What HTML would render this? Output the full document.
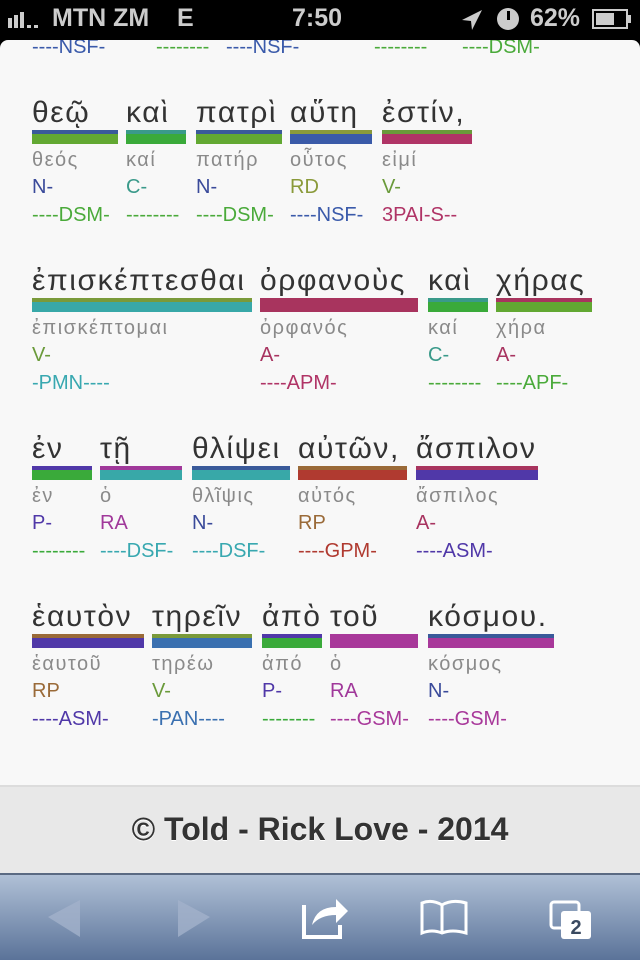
<!DOCTYPE html>
<html><head><meta charset="utf-8"><style>
*{margin:0;padding:0;box-sizing:border-box}
body{width:640px;height:960px;overflow:hidden;background:#000;font-family:"Liberation Sans","DejaVu Sans",sans-serif;position:relative}
.sb{position:absolute;left:0;top:0;width:640px;height:40px;background:#000;color:#ccc;font-weight:bold;font-size:25px}
.page{position:absolute;left:0;top:40px;width:640px;height:833px;background:#f8f8f8;border-radius:8px 8px 0 0;overflow:hidden}
.c{position:absolute}
.w{position:absolute;left:0;white-space:nowrap;font-size:30px;line-height:30px;color:#333;font-family:"Liberation Sans","DejaVu Sans",sans-serif;letter-spacing:1.6px}
.t{position:absolute;left:0;right:0;height:4px}
.b{position:absolute;left:0;right:0;height:10px}
.l{position:absolute;left:0;white-space:nowrap;font-size:20px;line-height:24px;color:#8a8a8a;font-family:"Liberation Sans","DejaVu Sans",sans-serif;letter-spacing:1.5px}
.p,.q{position:absolute;left:0;white-space:nowrap;font-size:20px;line-height:24px}
.foot{position:absolute;left:0;top:745px;width:640px;height:88px;background:#e8e8e8;border-top:2px solid #dcdcdc;text-align:center;font-weight:bold;font-size:32px;color:#333;line-height:84px;text-shadow:0 1px 0 #fff}
.tb{position:absolute;left:0;top:873px;width:640px;height:87px;background:linear-gradient(#b0c0d6,#5b7399);border-top:2px solid #5a6a82}
</style></head><body>
<div class="sb">
<div style="position:absolute;left:8px;top:18px;width:4px;height:10px;background:#ccc"></div>
<div style="position:absolute;left:14px;top:15px;width:4px;height:13px;background:#ccc"></div>
<div style="position:absolute;left:20px;top:12px;width:4px;height:16px;background:#ccc"></div>
<div style="position:absolute;left:27px;top:25px;width:4px;height:3px;background:#ccc"></div>
<div style="position:absolute;left:34px;top:25px;width:4px;height:3px;background:#ccc"></div>
<div style="position:absolute;left:52px;top:4px">MTN ZM</div>
<div style="position:absolute;left:177px;top:4px">E</div>
<div style="position:absolute;left:292px;top:4px">7:50</div>
<svg style="position:absolute;left:460px;top:8px" width="24" height="24"><path d="M22 2 L2 12 L11 13 L12 22 Z" fill="#ccc"/></svg>
<div style="position:absolute;left:497px;top:8px;width:22px;height:22px;border-radius:50%;background:#ccc"></div>
<div style="position:absolute;left:507px;top:11px;width:3px;height:9px;background:#000"></div>
<div style="position:absolute;left:530px;top:4px">62%</div>
<div style="position:absolute;left:592px;top:9px;width:36px;height:20px;border:2px solid #ccc"></div>
<div style="position:absolute;left:596px;top:13px;width:18px;height:12px;background:#ccc"></div>
<div style="position:absolute;left:628px;top:15px;width:3px;height:8px;background:#ccc"></div>
</div>
<div class="page">

<div class="c" style="left:32px;top:-78px;width:100px"><div class="q" style="top:73px;color:#3a5aaa">----NSF-</div></div>
<div class="c" style="left:156px;top:-78px;width:100px"><div class="q" style="top:73px;color:#4aaa3a">--------</div></div>
<div class="c" style="left:226px;top:-78px;width:100px"><div class="q" style="top:73px;color:#3a5aaa">----NSF-</div></div>
<div class="c" style="left:374px;top:-78px;width:100px"><div class="q" style="top:73px;color:#4aaa3a">--------</div></div>
<div class="c" style="left:462px;top:-78px;width:100px"><div class="q" style="top:73px;color:#4aaa3a">----DSM-</div></div>

<div class="c" style="left:32px;top:90px;width:86px"><div class="w" style="top:-32px">θεῷ</div><div class="t" style="top:0;background:#3a5a9a"></div><div class="b" style="top:4px;background:#62a832"></div><div class="l" style="top:18px">θεός</div><div class="p" style="top:45px;color:#3a4a9a">N-</div><div class="q" style="top:73px;color:#4aaa3a">----DSM-</div></div>
<div class="c" style="left:126px;top:90px;width:60px"><div class="w" style="top:-32px">καὶ</div><div class="t" style="top:0;background:#3a9a8a"></div><div class="b" style="top:4px;background:#3aaa3a"></div><div class="l" style="top:18px">καί</div><div class="p" style="top:45px;color:#3a9a8a">C-</div><div class="q" style="top:73px;color:#4aaa3a">--------</div></div>
<div class="c" style="left:196px;top:90px;width:86px"><div class="w" style="top:-32px">πατρὶ</div><div class="t" style="top:0;background:#3a5a9a"></div><div class="b" style="top:4px;background:#62a832"></div><div class="l" style="top:18px">πατήρ</div><div class="p" style="top:45px;color:#3a4a9a">N-</div><div class="q" style="top:73px;color:#4aaa3a">----DSM-</div></div>
<div class="c" style="left:290px;top:90px;width:82px"><div class="w" style="top:-32px">αὕτη</div><div class="t" style="top:0;background:#8a9a3a"></div><div class="b" style="top:4px;background:#3a5aa8"></div><div class="l" style="top:18px">οὗτος</div><div class="p" style="top:45px;color:#8a9a3a">RD</div><div class="q" style="top:73px;color:#3a5aaa">----NSF-</div></div>
<div class="c" style="left:382px;top:90px;width:90px"><div class="w" style="top:-32px">ἐστίν,</div><div class="t" style="top:0;background:#6a9a3a"></div><div class="b" style="top:4px;background:#b03466"></div><div class="l" style="top:18px">εἰμί</div><div class="p" style="top:45px;color:#6a9a3a">V-</div><div class="q" style="top:73px;color:#b03466">3PAI-S--</div></div>

<div class="c" style="left:32px;top:258px;width:220px"><div class="w" style="top:-32px">ἐπισκέπτεσθαι</div><div class="t" style="top:0;background:#7a9a3a"></div><div class="b" style="top:4px;background:#38a8a8"></div><div class="l" style="top:18px">ἐπισκέπτομαι</div><div class="p" style="top:45px;color:#6a9a3a">V-</div><div class="q" style="top:73px;color:#38a8b0">-PMN----</div></div>
<div class="c" style="left:260px;top:258px;width:158px"><div class="w" style="top:-32px">ὀρφανοὺς</div><div class="t" style="top:0;background:#a8345e"></div><div class="b" style="top:4px;background:#a8345e"></div><div class="l" style="top:18px">ὀρφανός</div><div class="p" style="top:45px;color:#a83460">A-</div><div class="q" style="top:73px;color:#b03466">----APM-</div></div>
<div class="c" style="left:428px;top:258px;width:60px"><div class="w" style="top:-32px">καὶ</div><div class="t" style="top:0;background:#3a9a8a"></div><div class="b" style="top:4px;background:#3aaa3a"></div><div class="l" style="top:18px">καί</div><div class="p" style="top:45px;color:#3a9a8a">C-</div><div class="q" style="top:73px;color:#4aaa3a">--------</div></div>
<div class="c" style="left:496px;top:258px;width:96px"><div class="w" style="top:-32px">χήρας</div><div class="t" style="top:0;background:#a8345e"></div><div class="b" style="top:4px;background:#62a832"></div><div class="l" style="top:18px">χήρα</div><div class="p" style="top:45px;color:#a83460">A-</div><div class="q" style="top:73px;color:#4aaa3a">----APF-</div></div>

<div class="c" style="left:32px;top:426px;width:60px"><div class="w" style="top:-32px">ἐν</div><div class="t" style="top:0;background:#5038a8"></div><div class="b" style="top:4px;background:#3aaa3a"></div><div class="l" style="top:18px">ἐν</div><div class="p" style="top:45px;color:#5038a8">P-</div><div class="q" style="top:73px;color:#3aaa3a">--------</div></div>
<div class="c" style="left:100px;top:426px;width:82px"><div class="w" style="top:-32px">τῇ</div><div class="t" style="top:0;background:#a0389a"></div><div class="b" style="top:4px;background:#38a8a8"></div><div class="l" style="top:18px">ὁ</div><div class="p" style="top:45px;color:#a0389a">RA</div><div class="q" style="top:73px;color:#38a8b0">----DSF-</div></div>
<div class="c" style="left:192px;top:426px;width:98px"><div class="w" style="top:-32px">θλίψει</div><div class="t" style="top:0;background:#3a5a9a"></div><div class="b" style="top:4px;background:#38a8a8"></div><div class="l" style="top:18px">θλῖψις</div><div class="p" style="top:45px;color:#3a4a9a">N-</div><div class="q" style="top:73px;color:#38a8b0">----DSF-</div></div>
<div class="c" style="left:298px;top:426px;width:109px"><div class="w" style="top:-32px">αὐτῶν,</div><div class="t" style="top:0;background:#9a6a38"></div><div class="b" style="top:4px;background:#b03a30"></div><div class="l" style="top:18px">αὐτός</div><div class="p" style="top:45px;color:#9a6a38">RP</div><div class="q" style="top:73px;color:#b03a30">----GPM-</div></div>
<div class="c" style="left:416px;top:426px;width:122px"><div class="w" style="top:-32px">ἄσπιλον</div><div class="t" style="top:0;background:#a8345e"></div><div class="b" style="top:4px;background:#5038a8"></div><div class="l" style="top:18px">ἄσπιλος</div><div class="p" style="top:45px;color:#a83460">A-</div><div class="q" style="top:73px;color:#5038a8">----ASM-</div></div>

<div class="c" style="left:32px;top:594px;width:112px"><div class="w" style="top:-32px">ἑαυτὸν</div><div class="t" style="top:0;background:#9a6a38"></div><div class="b" style="top:4px;background:#5038a8"></div><div class="l" style="top:18px">ἑαυτοῦ</div><div class="p" style="top:45px;color:#9a6a38">RP</div><div class="q" style="top:73px;color:#5038a8">----ASM-</div></div>
<div class="c" style="left:152px;top:594px;width:100px"><div class="w" style="top:-32px">τηρεῖν</div><div class="t" style="top:0;background:#7a9a3a"></div><div class="b" style="top:4px;background:#3a70b0"></div><div class="l" style="top:18px">τηρέω</div><div class="p" style="top:45px;color:#6a9a3a">V-</div><div class="q" style="top:73px;color:#3a70b0">-PAN----</div></div>
<div class="c" style="left:262px;top:594px;width:60px"><div class="w" style="top:-32px">ἀπὸ</div><div class="t" style="top:0;background:#5038a8"></div><div class="b" style="top:4px;background:#3aaa3a"></div><div class="l" style="top:18px">ἀπό</div><div class="p" style="top:45px;color:#5038a8">P-</div><div class="q" style="top:73px;color:#3aaa3a">--------</div></div>
<div class="c" style="left:330px;top:594px;width:88px"><div class="w" style="top:-32px">τοῦ</div><div class="t" style="top:0;background:#a8389a"></div><div class="b" style="top:4px;background:#a8389a"></div><div class="l" style="top:18px">ὁ</div><div class="p" style="top:45px;color:#a0389a">RA</div><div class="q" style="top:73px;color:#a8389a">----GSM-</div></div>
<div class="c" style="left:428px;top:594px;width:126px"><div class="w" style="top:-32px">κόσμου.</div><div class="t" style="top:0;background:#3a5a9a"></div><div class="b" style="top:4px;background:#a8389a"></div><div class="l" style="top:18px">κόσμος</div><div class="p" style="top:45px;color:#3a4a9a">N-</div><div class="q" style="top:73px;color:#a8389a">----GSM-</div></div>

<div class="foot">© Told - Rick Love - 2014</div>
</div>
<div class="tb">
<svg width="640" height="85" style="position:absolute;left:0;top:0">
<path d="M48 42 L80 25 L80 62 Z" fill="#a2b2ca" opacity="0.8"/>
<path d="M210 42 L178 25 L178 62 Z" fill="#a2b2ca" opacity="0.8"/>
<path d="M304 30 L304 62 L340 62 L340 50" fill="none" stroke="#fff" stroke-width="4"/>
<path d="M312 50 Q316 32 336 32 L336 24 L348 36 L336 48 L336 40 Q320 40 312 50 Z" fill="#fff"/>
<path d="M422 58 L422 28 Q432 24 442 30 Q452 24 466 28 L466 58 Q452 54 442 58 Q432 54 422 58 Z M442 30 L442 58" fill="none" stroke="#fff" stroke-width="3"/>
<rect x="551" y="27" width="28" height="26" rx="3" fill="none" stroke="#fff" stroke-width="3"/>
<rect x="561" y="36" width="30" height="28" rx="3" fill="#fff"/>
<text x="576" y="59" text-anchor="middle" font-family="Liberation Sans" font-weight="bold" font-size="20" fill="#3a4a60">2</text>
</svg>
</div>
</body></html>
